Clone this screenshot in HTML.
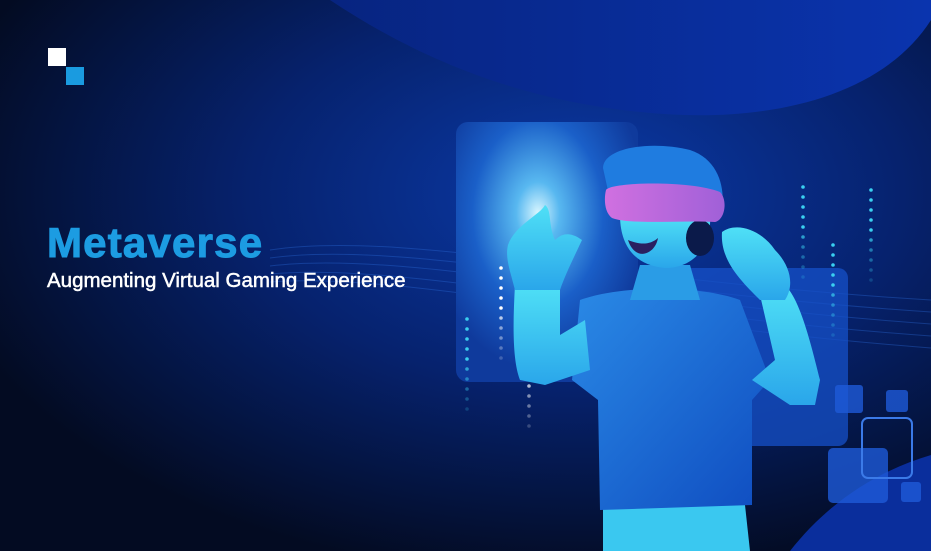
<!DOCTYPE html>
<html><head><meta charset="utf-8"><style>
html,body{margin:0;padding:0;width:931px;height:551px;overflow:hidden;background:#030b22}
svg{position:absolute;left:0;top:0}
.t{position:absolute;left:47px;font-family:"Liberation Sans",sans-serif;font-weight:bold;white-space:nowrap}
</style></head><body>
<svg width="931" height="551" viewBox="0 0 931 551">
<defs>
<radialGradient id="bg" cx="0.62" cy="0.35" r="0.7">
<stop offset="0" stop-color="#0b3aa8"/><stop offset="0.5" stop-color="#06226e"/><stop offset="1" stop-color="#030b22"/>
</radialGradient>
<linearGradient id="blob" x1="0" y1="0" x2="1" y2="0"><stop offset="0" stop-color="#072480"/><stop offset="1" stop-color="#0a34ae"/></linearGradient>
<radialGradient id="glow" cx="0.45" cy="0.35" r="0.6"><stop offset="0" stop-color="#d8f6ff"/><stop offset="0.2" stop-color="#58b8f0"/><stop offset="0.6" stop-color="#1a5fc8"/><stop offset="1" stop-color="#0f3a9c"/></radialGradient>
<linearGradient id="skin" x1="0" y1="0" x2="0" y2="1"><stop offset="0" stop-color="#4fe0f6"/><stop offset="1" stop-color="#2aa6ea"/></linearGradient>
<linearGradient id="shirt" x1="0" y1="0" x2="1" y2="1"><stop offset="0" stop-color="#2a8ae6"/><stop offset="1" stop-color="#0f4cc0"/></linearGradient>
<linearGradient id="visor" x1="0" y1="0" x2="1" y2="0"><stop offset="0" stop-color="#d070e0"/><stop offset="1" stop-color="#a060d8"/></linearGradient>
<g id="c1"><circle cx="0" cy="0" r="1.8"/><circle cx="0" cy="10" r="1.8"/><circle cx="0" cy="20" r="1.8"/><circle cx="0" cy="30" r="1.8"/><circle cx="0" cy="40" r="1.8"/><circle cx="0" cy="50" r="1.8" opacity=".7"/><circle cx="0" cy="60" r="1.8" opacity=".5"/><circle cx="0" cy="70" r="1.8" opacity=".4"/><circle cx="0" cy="80" r="1.8" opacity=".3"/><circle cx="0" cy="90" r="1.8" opacity=".2"/></g>
</defs>
<rect width="931" height="551" fill="url(#bg)"/>
<path d="M330 0 H931 V20 C880 100 760 125 640 112 C520 100 420 60 330 0Z" fill="url(#blob)"/>
<path d="M790 551 C830 500 880 470 931 455 V551Z" fill="#0a2e9c"/>
<g stroke="#2f6fe0" stroke-opacity="0.35" fill="none" stroke-width="1">
<path d="M270 250 C400 230 600 280 931 300"/><path d="M270 258 C400 240 600 290 931 312"/><path d="M270 266 C400 250 600 300 931 324"/><path d="M270 274 C400 262 600 312 931 336"/><path d="M270 282 C400 272 600 322 931 348"/>
</g>
<rect x="456" y="122" width="182" height="260" rx="12" fill="url(#glow)"/>
<rect x="665" y="268" width="183" height="178" rx="10" fill="#1650c8" opacity="0.75"/>
<g fill="#1e5ad8" opacity="0.8">
<rect x="835" y="385" width="28" height="28" rx="3"/><rect x="886" y="390" width="22" height="22" rx="3"/>
<rect x="828" y="448" width="60" height="55" rx="5"/><rect x="901" y="482" width="20" height="20" rx="3"/>
</g>
<rect x="862" y="418" width="50" height="60" rx="6" fill="none" stroke="#3b7ae8" stroke-width="2"/>
<use href="#c1" x="501" y="268" fill="#ffffff"/>
<use href="#c1" x="467" y="319" fill="#3ad0f0"/>
<use href="#c1" x="529" y="336" fill="#ffffff"/>
<use href="#c1" x="803" y="187" fill="#3ad0f0"/>
<use href="#c1" x="833" y="245" fill="#3ad0f0"/>
<use href="#c1" x="871" y="190" fill="#3ad0f0"/>
<path d="M603 505 H745 L750 551 H603Z" fill="#3ac8f0"/>
<path d="M580 300 C620 285 700 285 740 300 L770 380 L752 400 L752 505 L600 510 L598 400 L572 380Z" fill="url(#shirt)"/>
<path d="M515 285 L560 285 L560 335 L585 320 L590 370 L545 385 L520 380 C512 360 513 320 515 285Z" fill="url(#skin)"/>
<path d="M508 245 C515 225 540 215 545 205 C552 210 548 225 555 240 C565 230 575 235 582 240 C575 255 565 275 560 290 L515 290 C510 270 505 258 508 245Z" fill="url(#skin)"/>
<path d="M752 380 L790 405 L815 405 L820 380 C810 340 800 300 785 285 L760 295 L775 360 Z" fill="url(#skin)"/>
<path d="M722 232 C735 222 760 228 775 250 C790 265 795 285 785 300 L760 300 C740 280 720 260 722 232Z" fill="url(#skin)"/>
<path d="M640 265 L690 265 L700 300 L630 300Z" fill="#2a9ce6"/>
<path d="M620 215 C620 240 630 265 665 268 C695 268 712 245 710 215Z" fill="url(#skin)"/>
<path d="M628 240 C640 245 650 245 658 238 C655 255 635 262 628 240Z" fill="#2a2060"/>
<ellipse cx="700" cy="238" rx="14" ry="18" fill="#0b1a4a"/>
<path d="M603 168 C603 148 650 140 690 150 C720 160 725 190 722 210 L610 200Z" fill="#1f7ce0"/>
<path d="M606 190 C610 182 690 180 720 192 C728 200 725 220 715 222 C680 220 630 225 612 218 C604 212 604 198 606 190Z" fill="url(#visor)"/>
</svg>
<div class="t" style="top:219px;font-size:42px;color:#1c9ce2;letter-spacing:1.2px;-webkit-text-stroke:1px #1c9ce2">Metaverse</div>
<div class="t" style="top:269px;font-size:20.5px;color:#fff;font-weight:normal;-webkit-text-stroke:0.5px #fff">Augmenting Virtual Gaming Experience</div>
<div style="position:absolute;left:48px;top:48px;width:18px;height:18px;background:#fff"></div>
<div style="position:absolute;left:66px;top:67px;width:18px;height:18px;background:#1a9be0"></div>
</body></html>
